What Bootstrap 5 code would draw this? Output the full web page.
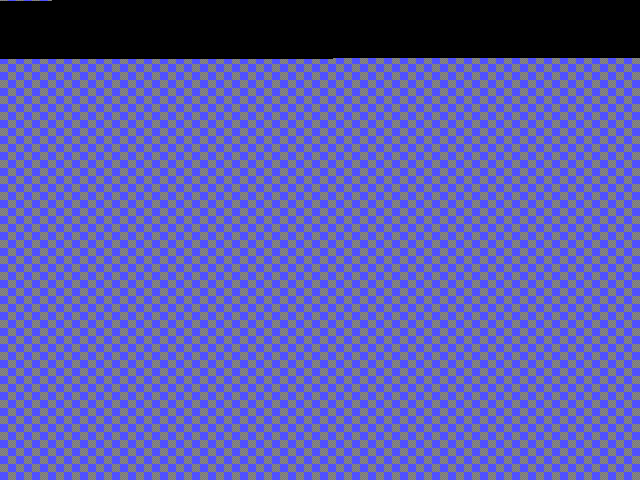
<!DOCTYPE html>
<html lang="en">
<head>
<meta charset="utf-8">
<title>Checker canvas</title>
<link href="https://cdn.jsdelivr.net/npm/bootstrap@5.3.0/dist/css/bootstrap.min.css" rel="stylesheet">
<style>
html, body { height: 100%; margin: 0; overflow: hidden; }
.checker-page {
  background-color: #808080;
  background-image:
    conic-gradient(#5050ff 25%, transparent 0 50%, #5050ff 0 75%, transparent 0),
    conic-gradient(#787878 25%, #888888 0 50%, #787878 0 75%, #888888 0);
  background-size: 16px 16px, 2px 2px;
  background-position: 0 0, 0 0;
}
.top-sliver { height: 1px; }
.sliver-gap { width: 52px; }
.sliver-black { background: #000; }
.bar-main { background: #000; height: 57px; }
.bar-left { width: 333px; height: 1px; background: #000; }
</style>
</head>
<body class="checker-page">
<div class="d-flex top-sliver"><div class="sliver-gap"></div><div class="flex-grow-1 sliver-black"></div></div>
<div class="bar-main"></div>
<div class="bar-left"></div>
<script src="https://cdn.jsdelivr.net/npm/bootstrap@5.3.0/dist/js/bootstrap.bundle.min.js"></script>
</body>
</html>
